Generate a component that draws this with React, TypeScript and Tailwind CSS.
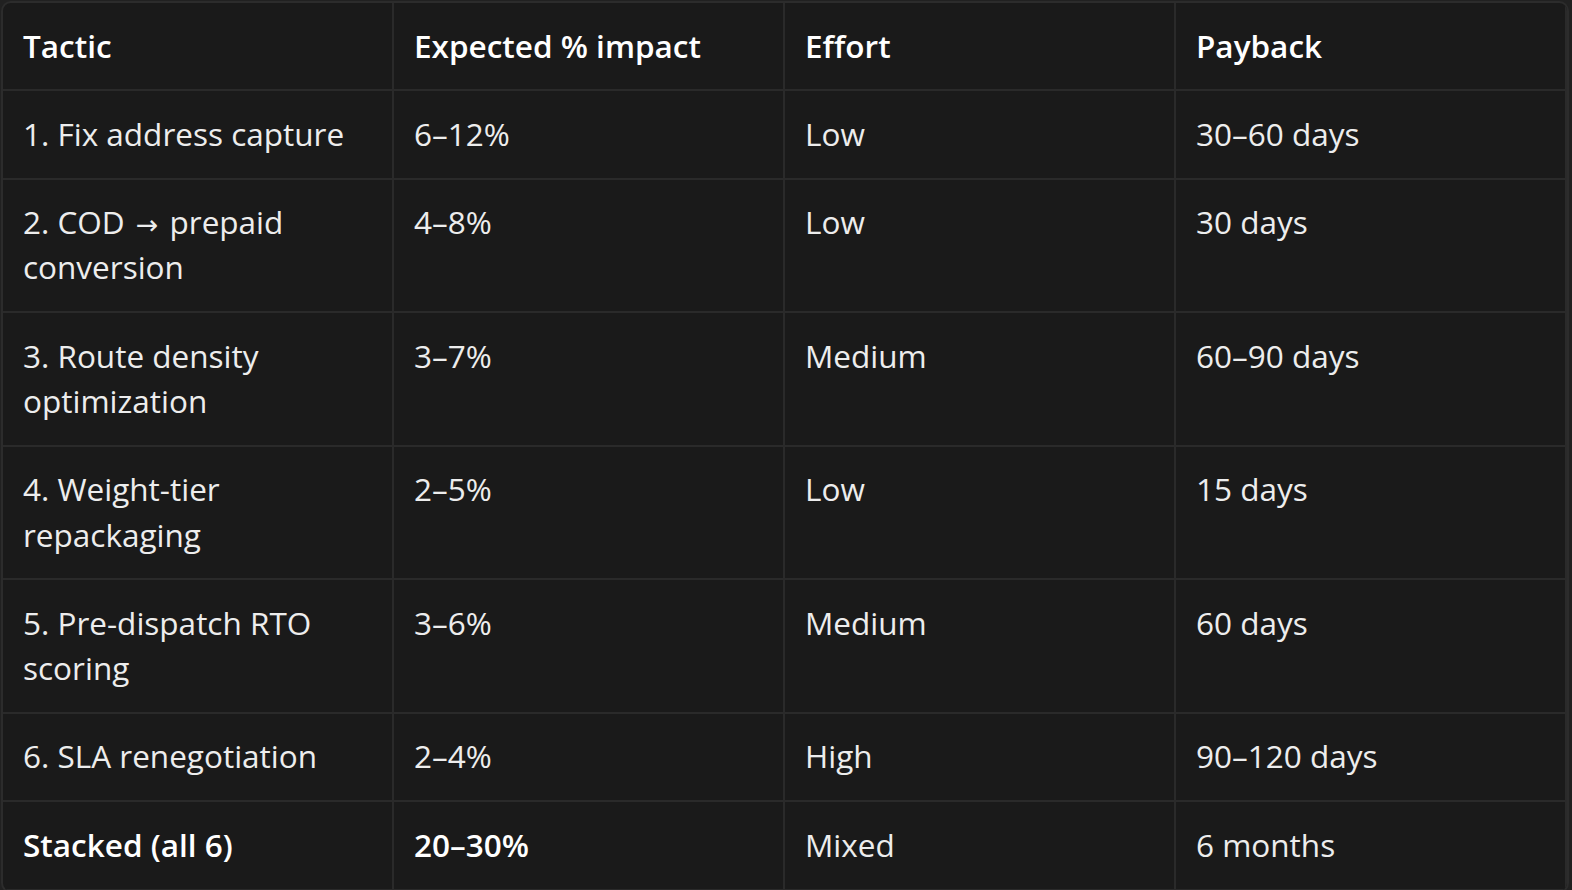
import type { ReactNode } from 'react';

const rows: [ReactNode, string, string, string][] = [
  ['1. Fix address capture', '6–12%', 'Low', '30–60 days'],
  [
    <>
      2. COD{' '}
      <span
        className="inline-block leading-none mx-[3px] text-[0.85em]"
        style={{ fontFamily: '"DejaVu Sans", sans-serif' }}
      >
        →
      </span>{' '}
      prepaid conversion
    </>,
    '4–8%',
    'Low',
    '30 days',
  ],
  ['3. Route density optimization', '3–7%', 'Medium', '60–90 days'],
  ['4. Weight-tier repackaging', '2–5%', 'Low', '15 days'],
  ['5. Pre-dispatch RTO scoring', '3–6%', 'Medium', '60 days'],
  ['6. SLA renegotiation', '2–4%', 'High', '90–120 days'],
];

const cell = 'border-r-2 border-b-2 border-[#2a2a2a] px-5 pt-[19.5px] pb-[21.5px] align-top text-left';

export default function App() {
  return (
    <div
      className="w-[1572px] h-[890px] bg-[#212121] p-px"
      style={{ fontFamily: '"Open Sans", "Noto Sans", sans-serif' }}
    >
      <div className="w-[1568px] rounded-[10px] border-2 border-[#2c2c2c] bg-[#1a1a1a] overflow-hidden">
        <table className="w-full table-fixed border-separate border-spacing-0 text-[31.5px] leading-[45.3px] text-[#ededed]">
          <thead>
            <tr>
              {['Tactic', 'Expected % impact', 'Effort', 'Payback'].map((h, i) => (
                <th
                  key={h}
                  className={`${cell} font-semibold text-white ${i === 3 ? 'border-r-0' : ''}`}
                >
                  {h}
                </th>
              ))}
            </tr>
          </thead>
          <tbody>
            {rows.map((r, ri) => (
              <tr key={ri}>
                {r.map((c, i) => (
                  <td key={i} className={`${cell} ${i === 3 ? 'border-r-0' : ''}`}>
                    {c}
                  </td>
                ))}
              </tr>
            ))}
            <tr>
              <td className={`${cell} border-b-0 font-semibold text-white`}>Stacked (all 6)</td>
              <td className={`${cell} border-b-0 font-semibold text-white`}>20–30%</td>
              <td className={`${cell} border-b-0`}>Mixed</td>
              <td className={`${cell} border-b-0 border-r-0`}>6 months</td>
            </tr>
          </tbody>
        </table>
      </div>
    </div>
  );
}
